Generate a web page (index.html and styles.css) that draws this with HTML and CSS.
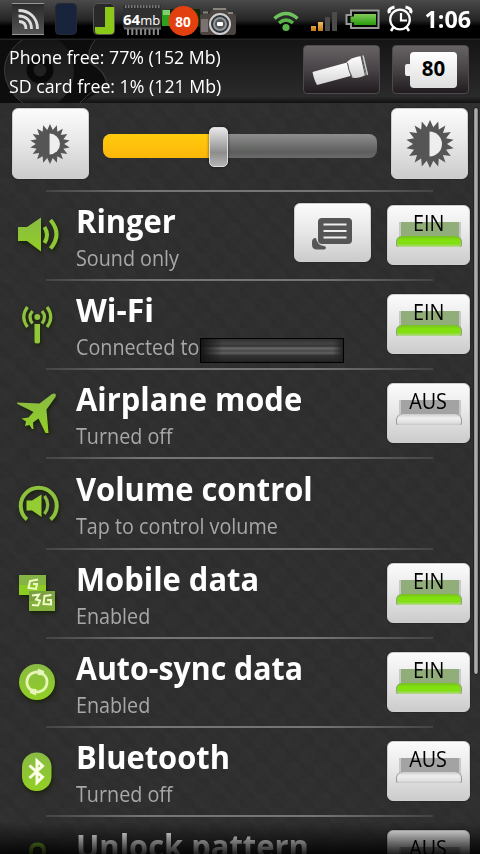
FILE: index.html
```html
<!DOCTYPE html>
<html lang="en">
<head>
<meta charset="utf-8">
<title>Quick settings</title>
<link rel="stylesheet" href="styles.css">
</head>
<body>
<svg class="defs" width="0" height="0">
  <defs>
    <linearGradient id="green" x1="0" y1="0" x2="0" y2="1"><stop offset="0" stop-color="#89ba45"/><stop offset="1" stop-color="#92cf24"/></linearGradient>
    <linearGradient id="torch" x1="0" y1="0" x2="0" y2="1"><stop offset="0" stop-color="#fff"/><stop offset="1" stop-color="#d4d4d4"/></linearGradient>
    <symbol id="sun" viewBox="-24 -24 48 48">
      <path fill="#555" d="M0-24 3.300-16.700 8.200-22.500 8.800-14.600 15.400-18.400 13-10.900 20.800-12 16-5.800 23.600-4.200 17 0 23.600 4.200 16 5.800 20.800 12 13 10.900 15.400 18.400 8.800 14.600 8.200 22.500 3.300 16.700 0 24-3.300 16.700-8.200 22.500-8.800 14.600-15.400 18.400-13 10.900-20.800 12-16 5.800-23.600 4.200-17 0-23.600-4.200-16-5.800-20.800-12-13-10.900-15.400-18.400-8.800-14.600-8.200-22.500-3.300-16.700Z"/>
      <path fill="#eee" d="M-.5-12.500a12.500 12.500 0 0 1 0 25Z"/>
    </symbol>
  </defs>
</svg>
<div class="screen">
  <div class="status">
    <svg class="status-icons" width="480" height="40" viewBox="0 0 480 40">
      <defs>
        <linearGradient id="sq" x1="0" y1="0" x2="0" y2="1"><stop offset="0" stop-color="#2a2a2a"/><stop offset="1" stop-color="#555"/></linearGradient>
        <linearGradient id="bat" x1="0" y1="0" x2="0" y2="1"><stop offset="0" stop-color="#82ca5a"/><stop offset="1" stop-color="#299b0b"/></linearGradient>
        <linearGradient id="bars" x1="0" y1="0" x2="0" y2="1"><stop offset="0" stop-color="#f4bd63"/><stop offset="1" stop-color="#c77a14"/></linearGradient>
      </defs>
      <rect x="12" y="3" width="32" height="32" fill="url(#sq)"/>
      <path d="M12 3.500h32M12 34.500h32" stroke="#999"/>
      <g fill="none" stroke="#ddd" stroke-width="2.800"><path d="M18.500 10.500c11 0 19 7 19 18.500"/><path d="M18.500 16c8 0 13 5 13 13"/><path d="M19 21.500c4.500 0 7 2.500 7 7.500"/></g>
      <rect x="55.500" y="3.500" width="21" height="31" rx="4" fill="#18243c" stroke="#252a33"/>
      <rect x="93.500" y="3.500" width="21" height="31" rx="4" fill="#292929" stroke="#555"/>
      <path d="M105 7h9v24q0 3-3 3h-13q-3 0-3-3v-4h10z" fill="#8cc817"/>
      <rect x="123" y="5" width="38" height="23" fill="#303030"/>
      <path d="M125 6.500h35" stroke="#777" stroke-width="3" stroke-dasharray="1.500 1.500"/>
      <path d="M124 28.500h37" stroke="#666" stroke-width="2"/>
      <path d="M127 32h32" stroke="#888" stroke-width="6" stroke-dasharray="2 2.300"/>
      <text x="123" y="24.500" class="mem"><tspan class="mem-n">64</tspan>mb</text>
      <path d="M162 10h36v16h-36z" fill="#2c9f1d"/><path d="M163 10h35v5h-35z" fill="#7fd070"/><path d="M170 9h30v18h-30z" fill="#0c2a08"/>
      <circle cx="183.500" cy="21" r="15" fill="#e2410f"/>
      <text x="183" y="26.500" class="badge" text-anchor="middle">80</text>
      <path d="M200 16q0-2 3-2h6l5-6h12l4 6h4q2 0 2 3v15q0 3-3 3h-30q-3 0-3-3z" fill="#4b4441"/>
      <path d="M203 12.500h5M228 13h5M213 9h13" stroke="#8a8480" stroke-width="2"/>
      <path d="M201 19h7v13h-7z" fill="#7a7270"/>
      <circle cx="220" cy="24" r="10" fill="#32373c" stroke="#cfcfcf" stroke-width="2"/>
      <circle cx="220" cy="24" r="6" fill="#555" stroke="#92989d" stroke-width="2"/>
      <rect x="217" y="22" width="6" height="4" rx="1" fill="#fff"/>
      <g fill="none" stroke="#57b647" stroke-width="3.500"><path d="M274.500 18.500q11.500-10 23 0" stroke="#6ec45c"/><path d="M279 23q7-6 14 0"/></g>
      <circle cx="286" cy="27.500" r="3.600" fill="#57b647"/>
      <path d="M311 26h5v5h-5zM318 22h5v9h-5z" fill="url(#bars)"/>
      <path d="M325 17h5v14h-5zM332 12h5v19h-5z" fill="#4b4b4b"/>
      <path d="M351 10.500h27.500v17.500H351v-4h-4.500v-9h4.500z" fill="#080808" stroke="#999" stroke-width="2"/>
      <path d="M354 14h22v11h-22v-2.500h-3.500v-6h3.500z" fill="url(#bat)"/>
      <g fill="none" stroke="#fff" stroke-width="2.200"><circle cx="400" cy="19.500" r="9.800"/><path d="M401 13v7.500h6"/><path d="M393.500 27l-2.500 4M406.500 27l2.500 4" stroke-width="2.600"/><path d="M389.500 13q-2-4.500 5-6M410.500 13q2-4.500-5-6" stroke-width="3.200"/></g>
    </svg>
    <span class="clock">1:06</span>
  </div>

  <header class="header">
    <svg class="deco" width="480" height="63" viewBox="0 40 480 63">
      <path d="M0 40h22C6 52 2 66 6 80q4 14 17 23H0zM58 40h37q-9 11-5 24 16 9 17 23l-27 16H57q17-12 17-32 0-20-16-31z" fill="#0d0d0d"/>
      <path d="M22 40C6 52 2 66 6 80q4 14 17 23M95 40q-9 11-5 22 16 9 17 23-14 3-27 18" fill="none" stroke="#3d3d3d"/>
      <circle cx="40" cy="70" r="10" fill="none" stroke="#090909" stroke-width="7"/>
    </svg>
    <div class="free"><div><span class="fit">Phone free: 77% (152 Mb)</span></div><div><span class="fit">SD card free: 1% (121 Mb)</span></div></div>
    <div class="dark-btn">
      <svg width="77" height="49" viewBox="303 45 77 49"><g fill="url(#torch)"><path d="M312.500 72 347 62.500 350.500 76 317 85q-3-5-4.500-13z"/><path d="M347 62q4-4.500 14-6l5 19q-9 4-14 2.500-4-7-5-15.500z"/><path d="M363 55.500 367.500 75" stroke="#ccc" stroke-width="1.500"/></g><path d="M347.500 63q1 8 4.500 14M361 56l4.500 20" fill="none" stroke="#555"/></svg>
    </div>
    <div class="dark-btn battery"><span class="cell"><span class="fit">80</span></span></div>
  </header>

  <main class="list">
    <section class="brightness">
      <button class="light-btn bright-btn"><svg width="40" height="40"><use href="#sun"/></svg></button>
      <div class="slider"><div class="fill"></div><div class="thumb"></div></div>
      <button class="light-btn bright-btn"><svg width="48" height="48"><use href="#sun"/></svg></button>
    </section>

    <section class="row">
      <svg class="icon" width="76" height="89" viewBox="0 192 76 89"><g fill="url(#green)"><path d="M18 227h9l14-9.500v34L27 241h-9z"/></g><g fill="none" stroke="#8fc835" stroke-width="4"><path d="M44.500 227q5 8 0 16"/><path d="M50.500 220q12 14.500 0 28.500"/></g></svg>
      <div class="text"><h2><span class="fit">Ringer</span></h2><p><span class="fit">Sound only</span></p></div>
      <button class="light-btn note"><svg width="42" height="34" viewBox="311 215 42 34"><path d="M312 241q0-4 4-4 1 7 8 8l2 1q0 2.500-2 2.500h-7q-5 0-5-5z" fill="#555"/><rect x="318" y="217" width="34" height="26" rx="4" fill="#555"/><path d="M323.500 223.500h23M323.500 230h23M323.500 236.500h23" stroke="#eee" stroke-width="2"/></svg></button>
      <button class="light-btn toggle on"><span class="fit">EIN</span><i></i></button>
    </section>

    <section class="row">
      <svg class="icon" width="76" height="89" viewBox="0 281 76 89"><path d="M34.500 324h5.500v18q0 1.500-2.700 1.500t-2.800-1.500z" fill="#91c839"/><circle cx="37.300" cy="317" r="3" fill="#8ec13e"/><g fill="none" stroke="#8ec13e" stroke-width="3.200"><path d="M32.500 311q-5 6 0 12.500M42 311q5 6 0 12.500"/><path d="M27.500 307q-7.500 10 0 20M47 307q7.500 10 0 20"/></g></svg>
      <div class="text wide"><h2><span class="fit">Wi-Fi</span></h2><p><span class="fit">Connected to</span><span class="redact"></span></p></div>
      <button class="light-btn toggle on"><span class="fit">EIN</span><i></i></button>
    </section>

    <section class="row">
      <svg class="icon" width="76" height="89" viewBox="0 370 76 89"><path d="M17 402.500 39.500 403.500 52 394q5-2 3.500 3L46.500 409.500 48.500 433h-3L38.500 418.500 33 422.500 33.500 429h-1.500l-2.500-4-4.500 1 1-4.500-4.500-3 7-1 5-5.500-16-8z" fill="url(#green)"/></svg>
      <div class="text"><h2><span class="fit">Airplane mode</span></h2><p><span class="fit">Turned off</span></p></div>
      <button class="light-btn toggle"><span class="fit">AUS</span><i></i></button>
    </section>

    <section class="row volume">
      <svg class="icon" width="76" height="89" viewBox="0 459 76 89"><path d="M27 519.500A18 18 0 1 1 50.500 519.500" fill="none" stroke="#8ec13e" stroke-width="4"/><path d="M26.500 500.500h5.500l9.500-6v22.500l-9.500-6.500h-5.500z" fill="#94cd31"/><path d="M44.500 496q6.500 9 0 18" fill="none" stroke="#8cba44" stroke-width="3.200"/></svg>
      <div class="text"><h2><span class="fit">Volume control</span></h2><p><span class="fit">Tap to control volume</span></p></div>
    </section>

    <section class="row">
      <svg class="icon" width="76" height="89" viewBox="0 550 76 89"><path d="M19 575h27v20H19z" fill="#85b444"/><path d="M19 585h27v10H19z" fill="#8ccb24"/><path d="M29 591h26v20H29z" fill="#7ba143"/><path d="M29 601h26v10H29z" fill="#84b13b"/><g fill="none" stroke="#f1fbc9" stroke-width="2"><path d="M38 579.500l-8 1.500-1.500 7 7.500 1 1-5h-4"/><path d="M32 595.500l7-1-3 5 4 1-2 5-6-.5M51.500 595l-7 1-1 8 7.500.5v-4.500h-4"/></g></svg>
      <div class="text"><h2><span class="fit">Mobile data</span></h2><p><span class="fit">Enabled</span></p></div>
      <button class="light-btn toggle on"><span class="fit">EIN</span><i></i></button>
    </section>

    <section class="row">
      <svg class="icon" width="76" height="89" viewBox="0 639 76 89"><circle cx="37" cy="682" r="18" fill="url(#green)"/><g fill="none" stroke="#e6f5b8" stroke-width="2.800"><path d="M31 690A10 10 0 0 1 34.500 672.300q2-.6 4.500 0"/><path d="M43 674A10 10 0 0 1 39.500 691.700q-2 .6-4.500 0"/></g><path d="M38 668.500l6 2.500v4.500l-6.500-.5zM36 695.500l-6-2.500v-4.500l6.500.5z" fill="#e6f5b8"/></svg>
      <div class="text narrow"><h2><span class="fit">Auto-sync data</span></h2><p><span class="fit">Enabled</span></p></div>
      <button class="light-btn toggle on"><span class="fit">EIN</span><i></i></button>
    </section>

    <section class="row">
      <svg class="icon" width="76" height="89" viewBox="0 728 76 89"><rect x="22" y="752.500" width="29.500" height="38.500" rx="14.500" fill="url(#green)"/><path d="M29.500 765.500 42.500 777 37 782.500V761l5.500 5L29.500 778" fill="none" stroke="#fbffe8" stroke-width="3"/></svg>
      <div class="text"><h2><span class="fit">Bluetooth</span></h2><p><span class="fit">Turned off</span></p></div>
      <button class="light-btn toggle"><span class="fit">AUS</span><i></i></button>
    </section>

    <section class="row last">
      <svg class="icon" width="76" height="89" viewBox="0 817 76 89"><path d="M31 858v-7q0-6.500 6.500-6.500t6.500 6.500v7" fill="none" stroke="#84b93a" stroke-width="4"/></svg>
      <div class="text"><h2><span class="fit">Unlock pattern</span></h2></div>
      <button class="light-btn toggle"><span class="fit">AUS</span><i></i></button>
    </section>
    <div class="scrollbar"></div>
    <div class="fade"></div>
  </main>
</div>
</body>
</html>
```
FILE: styles.css
```css
* { box-sizing: border-box; }
body { margin: 0; background: #2e2e2e; font-family: "Open Sans", "Noto Sans", sans-serif; }
h2, p { margin: 0; }
button { border: 0; padding: 0; font: inherit; }
.defs { position: absolute; }
.screen { width: 480px; height: 854px; overflow: hidden; display: flex; flex-direction: column; }
.fit { display: inline-block; transform-origin: 0 50%; white-space: nowrap; transform: scaleX(.94); }

.status { position: relative; height: 40px; flex: none; display: flex; justify-content: flex-end; padding-right: 9px;
  background: linear-gradient(#4a4a4a, #252525 50%, #000 65%, #000 94%, #2c2c2c); }
.status-icons { position: absolute; left: 0; top: 0; }
.clock { color: #fff; font-weight: 700; font-size: 24px; line-height: 38px; transform: scaleX(.97); transform-origin: 100% 50%; }
.mem { font-size: 13px; fill: #fff; }
.mem-n { font-size: 15px; font-weight: 700; }
.badge { font-size: 13.500px; font-weight: 700; fill: #fff; }

.header { position: relative; height: 63px; flex: none; display: flex; align-items: flex-start; padding: 5px 11px 0 9px;
  background: linear-gradient(#151515, #2a2a2a 90%, #111); }
.deco { position: absolute; left: 0; top: 0; }
.free { position: relative; flex: 1; margin-top: -2px; color: #fff; font-size: 18px; line-height: 28.500px; }
.free .fit { transform: scaleX(.985); }
.dark-btn { position: relative; width: 77px; height: 49px; margin-right: 12px; border-radius: 4px;
  background: linear-gradient(#676365, #474346 50%, #211b1f); border: 1px solid #4d4a4c; }
.dark-btn svg { display: block; margin: -1px; }
.battery { margin-right: 0; display: flex; align-items: center; justify-content: center; padding-left: 6px; }
.cell { position: relative; width: 47px; height: 36px; border-radius: 4px; background: linear-gradient(#fff, #dedede);
  font-size: 20.500px; font-weight: 700; line-height: 33px; text-align: center; color: #000; }
.cell .fit { transform-origin: 50% 50%; transform: none; }
.cell::before { content: ""; position: absolute; left: -5px; top: 12px; width: 6px; height: 12px; background: #eee; border-radius: 2px 0 0 2px; }

.list { position: relative; flex: 1; overflow: hidden;
  background: repeating-linear-gradient(45deg, #0000 0 1px, #00000014 1px 2px),
    repeating-conic-gradient(#323232 0 25%, #303030 0 50%) 0 0 / 30px 30px; }
.light-btn { flex: none; display: flex; align-items: center; justify-content: center; border-radius: 6px;
  background: linear-gradient(#fbfbfb, #e9e9e9 45%, #cdcccd); border: 1px solid #cfcfcf; box-shadow: 0 0 0 1px #1e1e1e55; }
.brightness, .row { position: relative; display: flex; }
.brightness { height: 89px; padding: 5px 12px 0; gap: 14px; }
.brightness::after, .row::after { content: ""; position: absolute; left: 46px; width: 387px; bottom: 0; height: 2px;
  background: linear-gradient(90deg, #444, #757575 25%, #757575 70%, #444); }
.bright-btn { width: 77px; height: 71px; }
.bright-btn:first-child svg { position: relative; left: -1px; }
.slider { position: relative; flex: 1; height: 24px; margin-top: 26px; border-radius: 8px; background: linear-gradient(#8e8e8e, #5c5e5c 75%, #6a6a6a); }
.fill { width: 115px; height: 24px; border-radius: 8px 0 0 8px; background: linear-gradient(#ffcb0d, #fdb60a); }
.thumb { position: absolute; left: 106px; top: -7px; width: 19px; height: 40px; border-radius: 5px; border: 1px solid #ddd;
  background: linear-gradient(#e8e8e8, #8d8d8d 65%, #b5b5b5); box-shadow: 0 0 3px #0009; }

.row { height: 89px; padding-right: 10px; }
.volume { height: 91px; }
.icon { flex: none; filter: drop-shadow(1px 2px 2px #162006); }
.text { flex: 1; min-width: 0; padding-top: 7px; }
.volume .text { padding-top: 8px; }
h2 { font-size: 32.500px; line-height: 44px; font-weight: 700; color: #fff; white-space: nowrap; }
h2 .fit { transform: scaleX(.95); }
.wide h2 .fit { transform: scaleX(.98); }
.narrow h2 .fit { transform: scaleX(.932); }
p { display: flex; font-size: 21px; line-height: 30px; color: #a8a8a8; white-space: nowrap; }
.note { width: 77px; height: 59px; margin: 11px 16px 0 0; }
.note svg { position: relative; left: -1px; }
.toggle { position: relative; width: 83px; height: 60px; margin-top: 13px; align-items: flex-start; font-size: 21px; line-height: 28px; color: #000; }
.toggle .fit { position: relative; z-index: 1; transform-origin: 50% 50%; margin-top: 3px; }
.toggle::before { content: ""; position: absolute; left: 11px; top: 16px; width: 58px; height: 16px; background: #a3a3a3; border-inline: 2px solid #c8c8c8; }
.toggle.on::before { background: #91ad79; }
.toggle i { position: absolute; left: 8px; top: 30px; width: 66px; height: 11px; border-radius: 6px 6px 2px 2px;
  background: linear-gradient(#ccc, #eee 35%, #e2e2e2 75%, #c8c8c8); box-shadow: inset 1px 0 #999, inset -1px 0 #999; }
.toggle.on i { background: linear-gradient(#78bd23, #80e20b 35%, #83df15 70%, #b8d695); }
.redact { position: absolute; left: 200px; top: 57px; width: 144px; height: 25px; border: 1px solid #000;
  background: linear-gradient(90deg, #151515, #15151500 15%, #15151500 93%, #222), linear-gradient(#303030, #444 22%, #333 30%, #686868 40%, #484848 52%, #606060 61%, #333 72%, #222); }
.scrollbar { position: absolute; right: 1px; top: 4px; width: 6px; height: 568px; border-radius: 3px; border: 1px solid #222;
  background: linear-gradient(90deg, #888, #b8b8b8, #777); }
.fade { position: absolute; left: 0; right: 0; bottom: 0; height: 32px; background: linear-gradient(#0000, #000d); }
```
